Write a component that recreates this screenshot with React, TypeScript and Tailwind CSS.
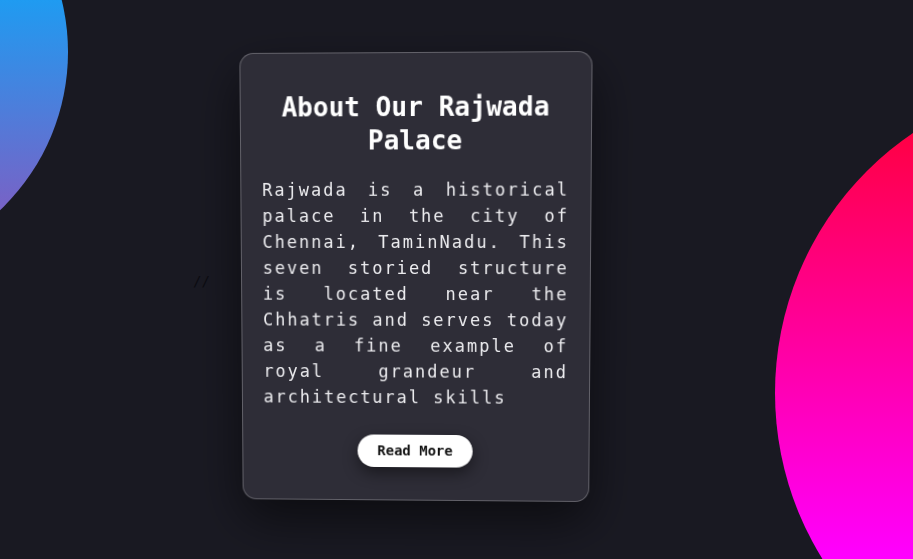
export default function App() {
  return (
    <div className="relative h-screen w-full overflow-hidden bg-[#191922] font-['DejaVu_Sans_Mono',monospace]">
      {/* decorative blobs */}
      <div className="absolute left-[-368px] top-[-166px] h-[436px] w-[436px] rounded-full bg-[linear-gradient(to_bottom,#1f9bf1_166px,#7862c6_376px)]" />
      <div className="absolute left-[775px] top-[79px] h-[628px] w-[628px] rounded-full bg-[linear-gradient(to_bottom,#ff0044_54px,#ff00ff_480px)]" />

      <div className="relative flex items-center pl-[193px] pt-[54px]">
        <span className="mt-[6px] text-[14px] text-[#0b0b11]">//</span>

        {/* card */}
        <div className="ml-[30px] w-[350px] [transform:perspective(1000px)_rotateX(-2.5deg)_rotateY(-1.8deg)] rounded-[14px] border border-white/25 bg-[#2e2d37] px-[21px] pt-[37px] pb-[33px] shadow-[0_20px_50px_rgba(0,0,0,0.55)]">
          <h2 className="text-center text-[26px] font-bold leading-[33px] text-white">
            About Our Rajwada Palace
          </h2>
          <p className="mt-[19px] text-justify text-[17px] leading-[26px] tracking-[2px] text-[#ececef]">
            Rajwada is a historical palace in the city of Chennai, TaminNadu. This seven storied structure is located near the Chhatris and serves today as a fine example of royal grandeur and architectural skills
          </p>
          <div className="mt-[25px] flex justify-center">
            <button className="h-[33px] rounded-full bg-white px-[20px] text-[14px] font-bold text-[#111] shadow-[0_6px_16px_rgba(0,0,0,0.45)]">
              Read More
            </button>
          </div>
        </div>
      </div>
    </div>
  );
}
